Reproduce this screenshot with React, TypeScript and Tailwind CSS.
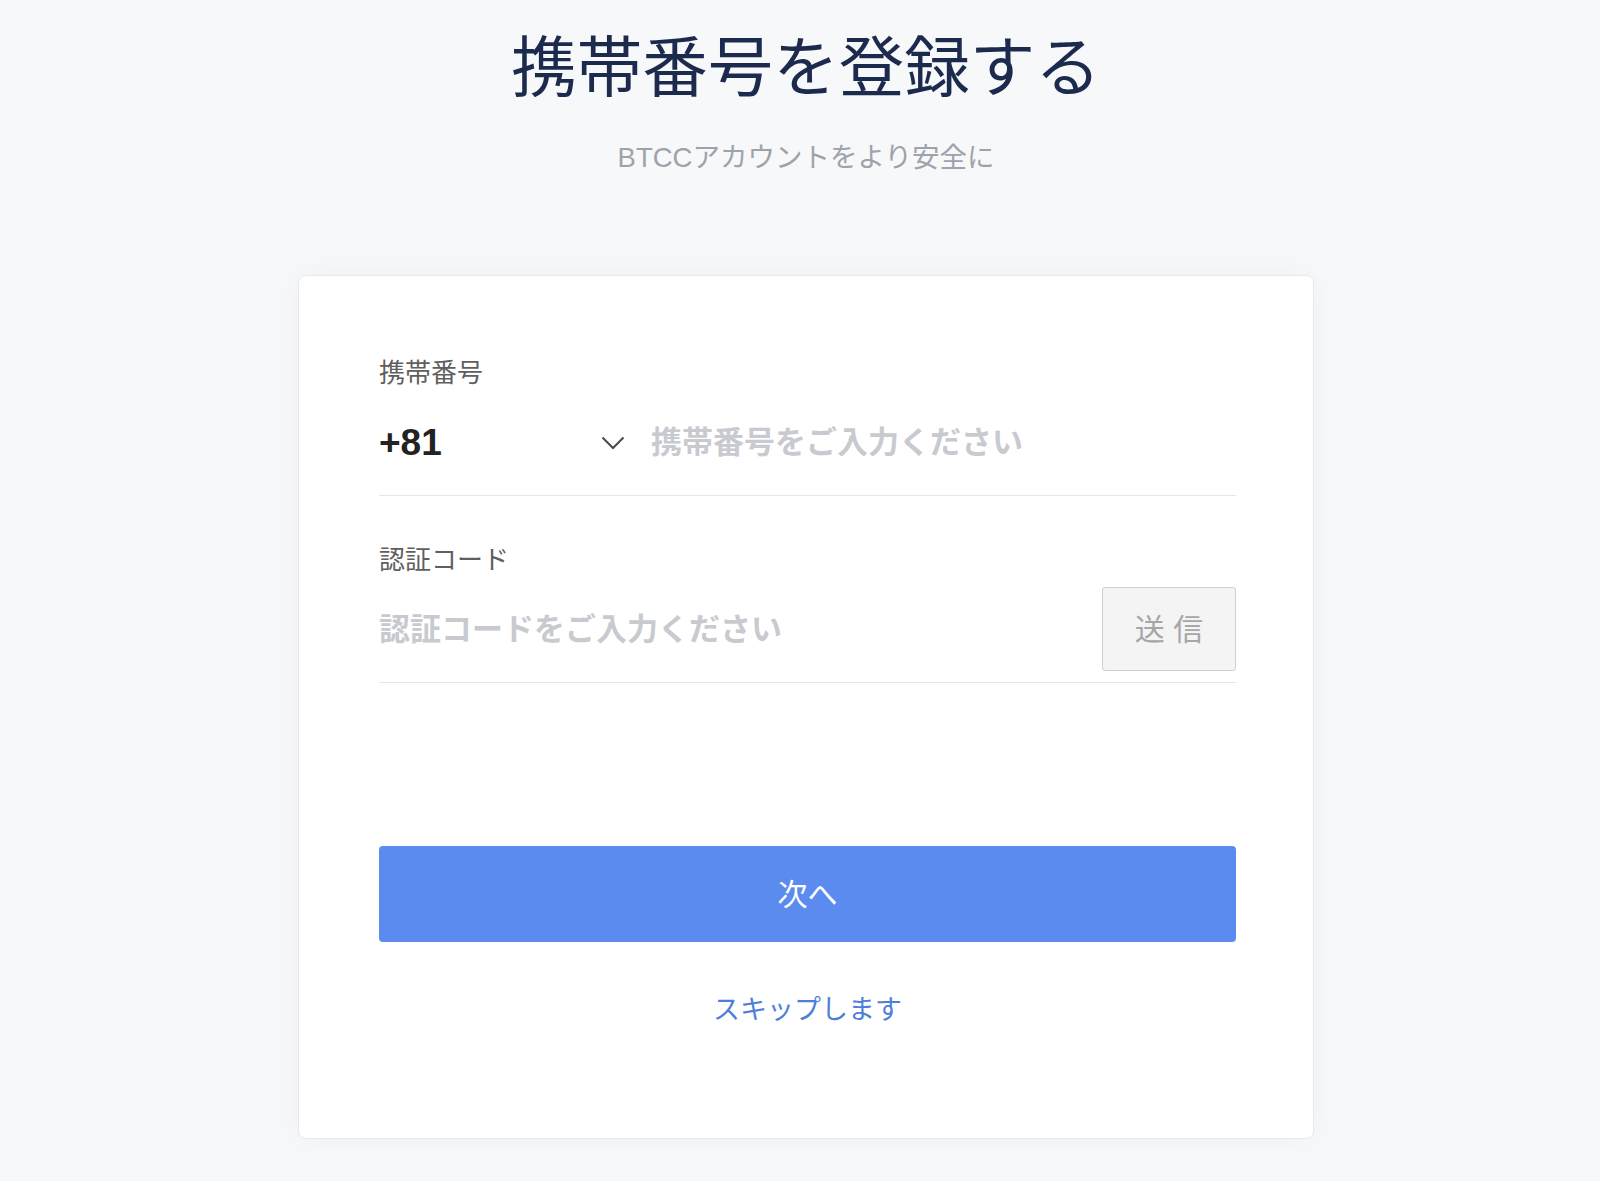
import React from "react";

const ChevronDown = () => (
  <svg width="24" height="14" viewBox="0 0 24 14" fill="none">
    <polyline points="1.5,1.5 12,12 22.5,1.5" stroke="#4a4a4a" strokeWidth="2" />
  </svg>
);

const App = () => {
  return (
    <div className="min-h-[1181px] bg-[#f7f8f9] pl-[12px] font-['Liberation_Sans','Noto_Sans_CJK_JP',sans-serif]">
      <div className="pt-[20px] text-center">
        <h1 className="text-[65.5px] leading-[98px] text-[#1c2a4e] font-normal">携帯番号を登録する</h1>
        <p className="mt-[20px] text-[27.5px] leading-[40px] text-[#9ea3ab]">BTCCアカウントをより安全に</p>
      </div>

      <div className="mx-auto mt-[97px] w-[1016px] rounded-[8px] border border-[#e9e9eb] bg-white pl-[80px] pr-[77px] pt-[79px] pb-[110px] shadow-[0_0_30px_rgba(0,0,0,0.04)]">
        <label className="block text-[26px] leading-[36px] text-[#5f5f5f]">携帯番号</label>
        <div className="flex h-[105px] items-center border-b border-[#e6e6e8]">
          <div className="flex w-[246px] items-center justify-between">
            <span className="text-[37px] font-bold text-[#222]">+81</span>
            <ChevronDown />
          </div>
          <input
            className="ml-[26px] flex-1 bg-transparent text-[31px] font-bold text-[#333] outline-none placeholder:text-[#c8cacf]"
            placeholder="携帯番号をご入力ください"
          />
        </div>

        <label className="mt-[46px] block text-[26px] leading-[36px] text-[#5f5f5f]">認証コード</label>
        <div className="flex h-[105px] items-center border-b border-[#e6e6e8]">
          <input
            className="flex-1 bg-transparent text-[31px] font-bold text-[#333] outline-none placeholder:text-[#c8cacf]"
            placeholder="認証コードをご入力ください"
          />
          <button className="mb-[2px] h-[84px] w-[134px] rounded-[3px] border border-[#cfd0d8] bg-[#f4f4f5] text-[30px] text-[#a6a6a6]">
            送 信
          </button>
        </div>

        <button className="mt-[163px] flex h-[96px] w-full items-center justify-center rounded-[4px] bg-[#5b8bef] text-[30px] text-white">
          次へ
        </button>

        <div className="mt-[50px] text-center">
          <a className="text-[27px] leading-[36px] text-[#4d7fd9]">スキップします</a>
        </div>
      </div>
    </div>
  );
};

export default App;
